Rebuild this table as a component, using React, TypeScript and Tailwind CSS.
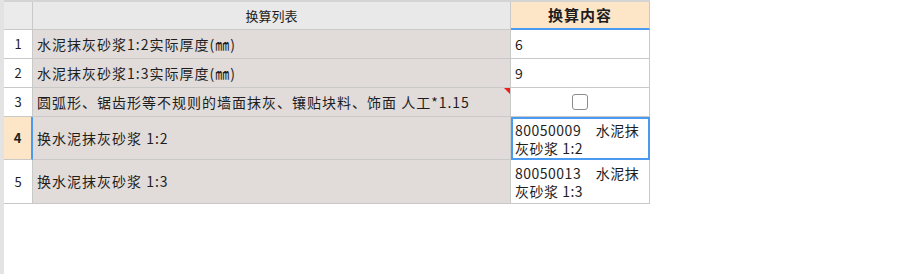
const rows = [
  { no: "1", name: "水泥抹灰砂浆1:2实际厚度(㎜)", value: ["6"] },
  { no: "2", name: "水泥抹灰砂浆1:3实际厚度(㎜)", value: ["9"] },
  { no: "3", name: "圆弧形、锯齿形等不规则的墙面抹灰、镶贴块料、饰面 人工*1.15", check: true, flag: true },
  { no: "4", name: "换水泥抹灰砂浆 1:2", value: ["80050009\u00a0\u00a0\u00a0\u00a0水泥抹", "灰砂浆 1:2"], active: true },
  { no: "5", name: "换水泥抹灰砂浆 1:3", value: ["80050013\u00a0\u00a0\u00a0\u00a0水泥抹", "灰砂浆 1:3"] },
];

const heights: Record<string, string> = {
  "1": "h-[29px]",
  "2": "h-[29px]",
  "3": "h-[29px]",
  "4": "h-[43px]",
  "5": "h-[44px]",
};

export default function App() {
  return (
    <div
      className="h-[274px] w-[923px] bg-white border-l-4 border-[#e3e3e3] text-[#1e1e1e]"
      style={{ fontFamily: '"Noto Sans CJK SC", "Liberation Sans", sans-serif' }}
    >
      <div className="w-[646px] border-t-2 border-[#d4d4d4] grid grid-cols-[29px_478px_139px]">
        {/* header */}
        <div className="h-[28px] bg-[#ebebeb] border-r border-b border-[#c9c9c9]" />
        <div className="h-[28px] bg-[#e9e9e9] border-r border-b border-[#c9c9c9] flex items-center justify-center text-[13px]">
          换算列表
        </div>
        <div className="h-[28px] bg-[#fde6c8] border-r border-[#c9c9c9] border-b-2 border-b-[#4a9af2] flex items-center justify-center text-[15px] font-bold tracking-[1px]">
          换算内容
        </div>

        {rows.map((r) => (
          <div key={r.no} className="contents">
            <div
              className={`${heights[r.no]} flex items-center justify-center text-[13px] border-b border-[#c9c9c9] ${
                r.active
                  ? "bg-[#fde6c8] font-bold border-r-2 border-r-[#4a9af2]"
                  : "bg-white border-r"
              }`}
            >
              {r.no}
            </div>
            <div
              className={`${heights[r.no]} relative bg-[#e1dcda] border-r border-b border-[#c9c9c9] flex items-center pl-1 text-[14px] tracking-[1px] whitespace-nowrap`}
            >
              {r.name}
              {r.flag && (
                <span className="absolute right-0 top-0 w-0 h-0 border-t-[6px] border-t-[#f01c1c] border-l-[6px] border-l-transparent" />
              )}
            </div>
            {r.check ? (
              <div className={`${heights[r.no]} bg-white border-r border-b border-[#c9c9c9] flex items-center justify-center`}>
                <span className="w-[16px] h-[16px] rounded-[3px] border border-[#8d8d8d] bg-white" />
              </div>
            ) : (
              <div
                className={`${heights[r.no]} bg-white flex flex-col justify-center text-[14px] leading-[18px] tracking-[0.5px] ${
                  r.active ? "border-2 border-[#4a9af2] pl-[2px]" : "border-r border-b border-[#c9c9c9] pl-1"
                }`}
              >
                {r.value!.map((line) => (
                  <span key={line} className="whitespace-nowrap">
                    {line}
                  </span>
                ))}
              </div>
            )}
          </div>
        ))}
      </div>
    </div>
  );
}
